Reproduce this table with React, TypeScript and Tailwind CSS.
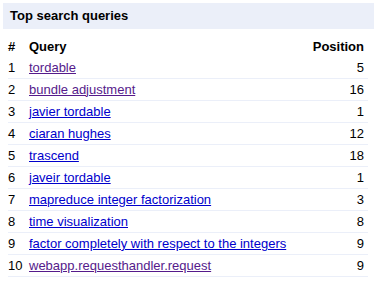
interface Query {
  rank: number
  text: string
  position: number
  visited?: boolean
}

const queries: Query[] = [
  { rank: 1, text: 'tordable', position: 5, visited: true },
  { rank: 2, text: 'bundle adjustment', position: 16, visited: true },
  { rank: 3, text: 'javier tordable', position: 1 },
  { rank: 4, text: 'ciaran hughes', position: 12 },
  { rank: 5, text: 'trascend', position: 18 },
  { rank: 6, text: 'javeir tordable', position: 1 },
  { rank: 7, text: 'mapreduce integer factorization', position: 3 },
  { rank: 8, text: 'time visualization', position: 8 },
  { rank: 9, text: 'factor completely with respect to the integers', position: 9 },
  { rank: 10, text: 'webapp.requesthandler.request', position: 9, visited: true }
]

export default function App() {
  return (
    <div
      className="w-[377px] h-[281px] bg-white pt-[3px] pl-[3px] text-[13px] text-black"
      style={{ fontFamily: '"Liberation Sans", Arial, sans-serif' }}
    >
      {/* Title band */}
      <div className="w-[371px] h-[26px] bg-[#ebeff9] flex items-center pl-[7px]">
        <h2 className="font-bold text-[13px]">Top search queries</h2>
      </div>

      <div className="ml-[5px] w-[360px] mt-[8px]">
        {/* Column headings */}
        <div className="flex items-center h-[20px] font-bold">
          <span className="w-[21px]">#</span>
          <span className="flex-1">Query</span>
          <span className="pr-[4px]">Position</span>
        </div>

        {/* Rows */}
        {queries.map((q) => (
          <div
            key={q.rank}
            className="flex items-center h-[22px] border-b border-[#ebeff9]"
          >
            <span className="w-[21px]">{q.rank}</span>
            <a
              href="#"
              className={`flex-1 underline ${q.visited ? 'text-[#551a8b]' : 'text-[#0000cc]'}`}
            >
              {q.text}
            </a>
            <span className="pr-[4px]">{q.position}</span>
          </div>
        ))}
      </div>
    </div>
  )
}
